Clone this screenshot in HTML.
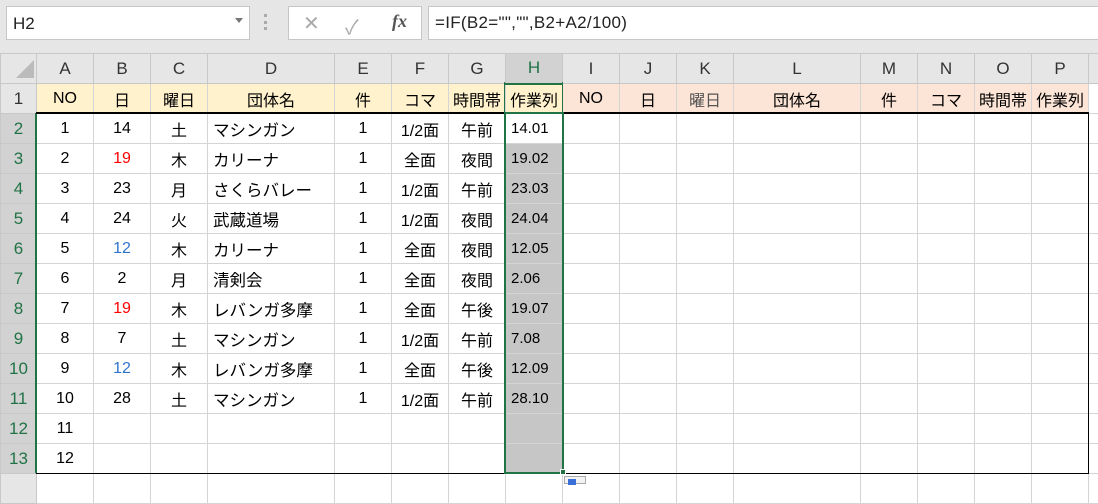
<!DOCTYPE html><html><head><meta charset="utf-8"><style>
*{box-sizing:border-box;margin:0;padding:0}
body{width:1098px;height:481px;overflow:hidden;background:#fff;font-family:"Liberation Sans","Noto Sans CJK JP",sans-serif;position:relative}
.top{position:absolute;left:0;top:0;width:1098px;height:53px;background:#e6e6e6}
.nb{position:absolute;left:6px;top:6px;width:244px;height:34px;background:#fff;border:1px solid #c6c6c6;font-size:17px;padding:7px 6px;color:#222}
.fb{position:absolute;left:288px;top:6px;width:134px;height:34px;background:#fff;border:1px solid #c6c6c6}
.fx{position:absolute;left:428px;top:6px;width:670px;height:34px;background:#fff;border:1px solid #c6c6c6;border-right:none;font-size:17px;padding:6px 6px;color:#222;letter-spacing:.3px}
table{position:absolute;left:0;top:53px;border-collapse:collapse;table-layout:fixed;width:1108px}
td{height:30px;border:1px solid #d4d4d4;font-size:16px;text-align:center;white-space:nowrap;overflow:hidden;padding:0;color:#000}
tr.h td{background:#e6e6e6;border-color:#c8c8c8;font-size:17px;color:#333}
td.r{background:#e6e6e6;border-color:#c8c8c8;font-size:17px;color:#333}
td.rs{background:#d2d2d2;color:#217346}
td.l{text-align:left;padding-left:5px;font-size:16.5px}
tr.y td.c{background:#fff2cc}
tr.y td.p{background:#fce4d6}
td.g{background:#c6c6c6;text-align:left;padding-left:5px;font-size:15px}
td.w{text-align:left;padding-left:5px;font-size:15px}
.red{color:#f00}.blu{color:#2e75d0}
</style></head><body>
<div class="top"></div>
<div class="nb">H2<span style="position:absolute;right:6px;top:11px;border:4px solid transparent;border-top:5px solid #777"></span></div>
<div style="position:absolute;left:264px;top:14px;width:3px;height:16px;border-left:3px dotted #aaa"></div>
<div class="fb"><span style="position:absolute;left:14px;top:4px;font-size:20px;color:#aaa">✕</span><span style="position:absolute;left:56px;top:4px;font-size:20px;color:#aaa">✓</span><span style="position:absolute;left:103px;top:4px;font-size:18px;font-style:italic;font-family:'Liberation Serif',serif;color:#555;font-weight:bold">fx</span></div>
<div class="fx">=IF(B2="","",B2+A2/100)</div>
<table>
<colgroup><col style="width:36px"><col style="width:57px"><col style="width:57px"><col style="width:57px"><col style="width:127px"><col style="width:57px"><col style="width:57px"><col style="width:57px"><col style="width:57px"><col style="width:57px"><col style="width:57px"><col style="width:57px"><col style="width:127px"><col style="width:57px"><col style="width:57px"><col style="width:57px"><col style="width:57px"><col style="width:20px"></colgroup>
<tr class="h"><td style="background:#e6e6e6"><span style="display:inline-block;width:0;height:0;border-left:18px solid transparent;border-bottom:18px solid #bbb;margin-left:12px;margin-top:6px"></span></td><td>A</td><td>B</td><td>C</td><td>D</td><td>E</td><td>F</td><td>G</td><td style="background:#d2d2d2;color:#217346;border-bottom:2px solid #217346">H</td><td>I</td><td>J</td><td>K</td><td>L</td><td>M</td><td>N</td><td>O</td><td>P</td><td></td></tr>
<tr class="y"><td class="r">1</td><td class="c">NO</td><td class="c">日</td><td class="c">曜日</td><td class="c">団体名</td><td class="c">件</td><td class="c">コマ</td><td class="c">時間帯</td><td class="c">作業列</td><td class="p">NO</td><td class="p">日</td><td class="p" style="color:#555">曜日</td><td class="p">団体名</td><td class="p">件</td><td class="p">コマ</td><td class="p">時間帯</td><td class="p">作業列</td><td></td></tr>
<tr><td class="r rs">2</td><td>1</td><td>14</td><td>土</td><td class="l">マシンガン</td><td>1</td><td>1/2面</td><td>午前</td><td class="w">14.01</td><td></td><td></td><td></td><td></td><td></td><td></td><td></td><td></td><td></td></tr>
<tr><td class="r rs">3</td><td>2</td><td class="red">19</td><td>木</td><td class="l">カリーナ</td><td>1</td><td>全面</td><td>夜間</td><td class="g">19.02</td><td></td><td></td><td></td><td></td><td></td><td></td><td></td><td></td><td></td></tr>
<tr><td class="r rs">4</td><td>3</td><td>23</td><td>月</td><td class="l">さくらバレー</td><td>1</td><td>1/2面</td><td>午前</td><td class="g">23.03</td><td></td><td></td><td></td><td></td><td></td><td></td><td></td><td></td><td></td></tr>
<tr><td class="r rs">5</td><td>4</td><td>24</td><td>火</td><td class="l">武蔵道場</td><td>1</td><td>1/2面</td><td>夜間</td><td class="g">24.04</td><td></td><td></td><td></td><td></td><td></td><td></td><td></td><td></td><td></td></tr>
<tr><td class="r rs">6</td><td>5</td><td class="blu">12</td><td>木</td><td class="l">カリーナ</td><td>1</td><td>全面</td><td>夜間</td><td class="g">12.05</td><td></td><td></td><td></td><td></td><td></td><td></td><td></td><td></td><td></td></tr>
<tr><td class="r rs">7</td><td>6</td><td>2</td><td>月</td><td class="l">清剣会</td><td>1</td><td>全面</td><td>夜間</td><td class="g">2.06</td><td></td><td></td><td></td><td></td><td></td><td></td><td></td><td></td><td></td></tr>
<tr><td class="r rs">8</td><td>7</td><td class="red">19</td><td>木</td><td class="l">レバンガ多摩</td><td>1</td><td>全面</td><td>午後</td><td class="g">19.07</td><td></td><td></td><td></td><td></td><td></td><td></td><td></td><td></td><td></td></tr>
<tr><td class="r rs">9</td><td>8</td><td>7</td><td>土</td><td class="l">マシンガン</td><td>1</td><td>1/2面</td><td>午前</td><td class="g">7.08</td><td></td><td></td><td></td><td></td><td></td><td></td><td></td><td></td><td></td></tr>
<tr><td class="r rs">10</td><td>9</td><td class="blu">12</td><td>木</td><td class="l">レバンガ多摩</td><td>1</td><td>全面</td><td>午後</td><td class="g">12.09</td><td></td><td></td><td></td><td></td><td></td><td></td><td></td><td></td><td></td></tr>
<tr><td class="r rs">11</td><td>10</td><td>28</td><td>土</td><td class="l">マシンガン</td><td>1</td><td>1/2面</td><td>午前</td><td class="g">28.10</td><td></td><td></td><td></td><td></td><td></td><td></td><td></td><td></td><td></td></tr>
<tr><td class="r rs">12</td><td>11</td><td></td><td></td><td></td><td></td><td></td><td></td><td class="g"></td><td></td><td></td><td></td><td></td><td></td><td></td><td></td><td></td><td></td></tr>
<tr><td class="r rs">13</td><td>12</td><td></td><td></td><td></td><td></td><td></td><td></td><td class="g"></td><td></td><td></td><td></td><td></td><td></td><td></td><td></td><td></td><td></td></tr>
<tr><td class="r" style="height:10px"></td><td></td><td></td><td></td><td></td><td></td><td></td><td></td><td></td><td></td><td></td><td></td><td></td><td></td><td></td><td></td><td></td><td></td></tr>
</table>
<div style="position:absolute;left:35px;top:113px;width:2px;height:360px;background:#217346"></div>
<div style="position:absolute;left:36px;top:112px;width:1053px;height:362px;border:1px solid #000;border-left:none"></div>
<div style="position:absolute;left:36px;top:112px;width:1053px;height:2px;background:#000"></div>
<div style="position:absolute;left:504px;top:82px;width:1px;height:31px;background:#217346"></div>
<div style="position:absolute;left:562px;top:82px;width:1px;height:31px;background:#217346"></div>
<div style="position:absolute;left:504px;top:112px;width:60px;height:362px;border:2px solid #217346"></div>
<div style="position:absolute;left:560px;top:469px;width:6px;height:6px;background:#217346;border:1px solid #fff"></div>
<div style="position:absolute;left:564px;top:476px;width:22px;height:8px;border:1px solid #aaa;background:#f3f3f3"><div style="position:absolute;left:3px;top:2px;width:8px;height:6px;background:#3b6fd8"></div></div>
</body></html>
